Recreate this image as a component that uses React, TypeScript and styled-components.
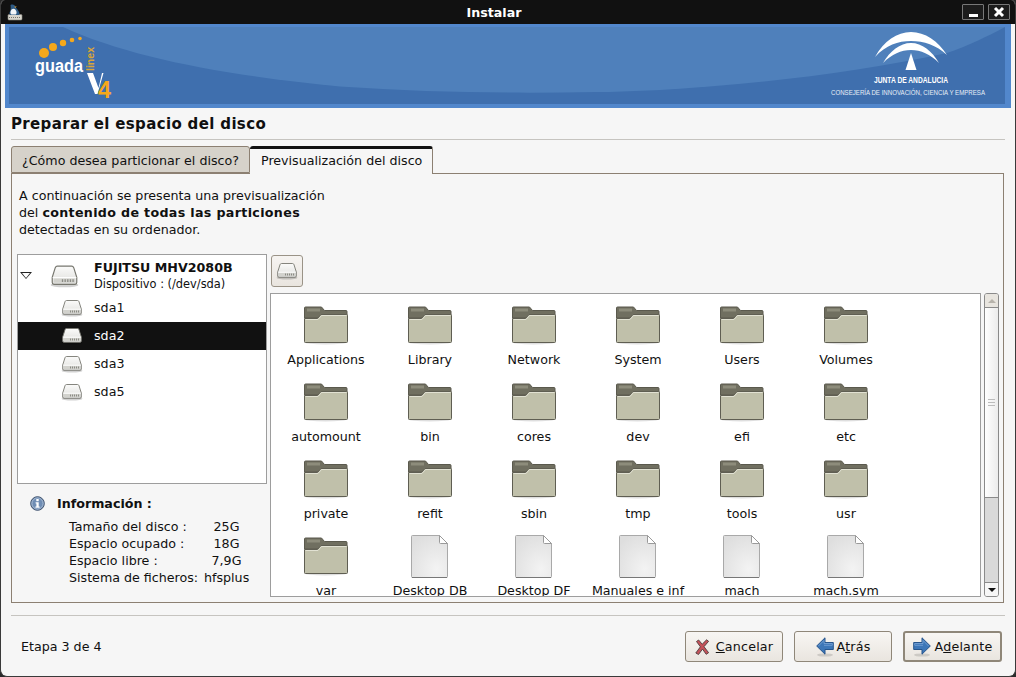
import React from "react";
import styled, { createGlobalStyle } from "styled-components";

const GlobalStyle = createGlobalStyle`
    html, body {
        margin: 0;
        padding: 0;
        background: #2a2a2a;
    }
    * {
        box-sizing: border-box;
    }
`;

const folderRows = [
    ["Applications", "Library", "Network", "System", "Users", "Volumes"],
    ["automount", "bin", "cores", "dev", "efi", "etc"],
    ["private", "refit", "sbin", "tmp", "tools", "usr"],
];

const lastRow = [
    { name: "var", kind: "folder" },
    { name: "Desktop DB", kind: "file" },
    { name: "Desktop DF", kind: "file" },
    { name: "Manuales e inf", kind: "file" },
    { name: "mach", kind: "file" },
    { name: "mach.sym", kind: "file" },
];

const partitions = ["sda1", "sda2", "sda3", "sda5"];

const infoRows = [
    ["Tamaño del disco :", "25G"],
    ["Espacio ocupado :", "18G"],
    ["Espacio libre :", "7,9G"],
    ["Sistema de ficheros:", "hfsplus"],
];

const DiskIcon: React.FC<{ width: number; height: number; id: string }> = ({ width, height, id }) => (
    <svg width={width} height={height} viewBox="0 0 22 18">
        <defs>
            <linearGradient id={id} x1="0" y1="0" x2="0" y2="1">
                <stop offset="0" stopColor="#fbfbfa" />
                <stop offset="1" stopColor="#dededb" />
            </linearGradient>
        </defs>
        <ellipse cx="11" cy="15.8" rx="10.5" ry="1.8" fill="#000" opacity="0.18" />
        <path
            d="M5.5 1.5h11c.8 0 1.2.5 1.5 1.2l2.3 7.3v4c0 .8-.5 1.3-1.3 1.3H3c-.8 0-1.3-.5-1.3-1.3v-4L4 2.7c.3-.7.7-1.2 1.5-1.2z"
            fill={`url(#${id})`}
            stroke="#77776f"
            strokeWidth="0.9"
        />
        <path d="M2 10.2h18" stroke="#fff" strokeWidth="0.8" />
        <rect x="3" y="11" width="16" height="3" fill="#d2d2cd" />
        <path d="M9 12.5h9" stroke="#8b8b85" strokeWidth="2" strokeDasharray="1 1" />
    </svg>
);

const FolderIcon: React.FC = () => (
    <svg width="44" height="39" viewBox="0 0 44 39">
        <ellipse cx="21.5" cy="36" rx="22" ry="2.6" fill="#000" opacity="0.13" />
        <path d="M1.5 1h16l3 3.500h21.500q1 0 1 1V12H.5V2q0-1 1-1z" fill="#706f60" stroke="#5a594d" />
        <path d="M3 4h13" stroke="#8d8c7b" strokeWidth="3" />
        <path
            d="M.5 12.500h13l3.500-4h25.500q1 0 1 1v26q0 1-1 1H1.500q-1 0-1-1z"
            fill="#c0c0aa"
            stroke="#5f5e52"
        />
        <path d="M1.500 13.500h12.500l3.500-4h25" fill="none" stroke="#e1e1d2" />
    </svg>
);

const FileIcon: React.FC = () => (
    <FileArt width="38" height="44" viewBox="0 0 38 44">
        <defs>
            <radialGradient id="sheet" cx="0.7" cy="0.8" r="0.9">
                <stop offset="0" stopColor="#f3f3f3" />
                <stop offset="1" stopColor="#dedede" />
            </radialGradient>
        </defs>
        <path d="M1.500.5h27l8 8v33q0 1-1 1h-34q-1 0-1-1v-40q0-1 1-1z" fill="url(#sheet)" stroke="#a9a9a9" />
        <path d="M1 42.500h35" stroke="#777" />
        <path d="M28.500.5v7q0 1 1 1h7z" fill="#fff" stroke="#9a9a9a" />
    </FileArt>
);

const InfoIcon: React.FC = () => (
    <svg width="15" height="15" viewBox="0 0 15 15">
        <circle cx="7.500" cy="7.500" r="6.800" fill="#6f8db4" stroke="#3c4f6b" />
        <circle cx="7.500" cy="7.500" r="5.600" fill="none" stroke="#a9bcd4" />
        <rect x="6.300" y="3" width="2.400" height="2.200" fill="#fff" />
        <path d="M5.600 6.300h3.100v4.200h1v1.200H5.400v-1.200h1V7.500h-.8z" fill="#fff" />
    </svg>
);

const CancelIcon: React.FC = () => (
    <svg width="15" height="16" viewBox="0 0 15 16">
        <path
            d="M1.500 2.500 3.600 1l3.600 4.200L11.600.8l2 1.500-4.600 5.400 4.600 6-2.400 1.600-3.700-5.200-4 5.400L.8 14l4.600-6.200z"
            fill="#c5525a"
            stroke="#4d3c3c"
            strokeWidth="0.9"
        />
    </svg>
);

const ArrowIcon: React.FC<{ flip?: boolean }> = ({ flip }) => (
    <svg width="18" height="20" viewBox="0 0 18 20" style={flip ? { transform: "scaleX(-1)" } : undefined}>
        <ellipse cx="9" cy="18" rx="8" ry="1.600" fill="#000" opacity="0.13" />
        <path d="M.7 9 9 .8v4.700h8.300v7H9v4.700z" fill="#3d77b8" stroke="#27558c" />
        <path d="M2.400 9 8 3.400v3.100h8.300v1.800H8" fill="none" stroke="#7aa5d6" strokeWidth="0.8" />
    </svg>
);

const AppIcon: React.FC = () => (
    <svg width="16" height="17" viewBox="0 0 16 17">
        <rect x="1" y="10.500" width="14" height="5.500" rx="1" fill="#d8d6ce" stroke="#8b8a82" strokeWidth="0.6" />
        <path d="M2 13.500h12" stroke="#77766f" strokeWidth="1" strokeDasharray="1 1" />
        <path d="M3.500 1C6 0 8 1 8.500 3c1.500 2 3.500 4 4 6.500.2 1-.5 1.500-1.500 1.500H4C2.500 11 2 9.500 2.800 8 4 6 3.800 3 3.500 1z" fill="#2f5c86" />
        <path d="M4.500 5.500c1.500-1 3-.8 4 .3 1.300 1.500 1.500 3.700.3 4.700H4.300c-1.500-1-.8-3.500.2-5z" fill="#f3f6f9" />
        <path d="M7.500 2.500h2.300L8 4z" fill="#e7a83a" />
    </svg>
);

const Banner: React.FC = () => (
    <BannerArt viewBox="5 24 1006 84" width="1006" height="84">
        <rect x="5" y="24" width="1006" height="84" fill="#5287cc" />
        <rect x="9" y="27" width="996" height="77" fill="#3f6fae" />
        <path
            d="M63 27C130 58 230 76 340 86.500 450 94 560 94 660 90 760 84 860 72 947 53 968 46 988 36 1005 27z"
            fill="#4f80bb"
        />
        <circle cx="44" cy="53" r="5" fill="#f5a81c" />
        <circle cx="53" cy="47" r="4" fill="#f5a81c" />
        <circle cx="63" cy="43" r="3.200" fill="#f5a81c" />
        <circle cx="72" cy="40" r="2.300" fill="#f5a81c" />
        <circle cx="80" cy="38.500" r="1.800" fill="#f5a81c" />
        <LogoText x="35" y="72" fontSize="17.500" fontWeight="700" fill="#fff" textLength="48" lengthAdjust="spacingAndGlyphs">
            guada
        </LogoText>
        <LogoText x="0" y="0" fontSize="10" fontWeight="700" fill="#d9a537" transform="translate(94 71) rotate(-90)" textLength="24" lengthAdjust="spacingAndGlyphs">
            linex
        </LogoText>
        <path d="M87 73h6l5.500 15L102 73h1.500L97.500 94h-2.500z" fill="#fff" />
        <LogoText x="98" y="98" fontSize="23" fontWeight="700" fill="#f5a81c" textLength="13" lengthAdjust="spacingAndGlyphs">
            4
        </LogoText>
        <path d="M875 57C884 41 897 32 911 32s27 9 36 23C936 45 924 41 911 41s-25 4-36 16z" fill="#fff" />
        <path d="M883 63C890 51 900 43 911 43s21 8 28 20C930 54 921 50 911 50s-19 4-28 13z" fill="#fff" />
        <path d="M911 53l-5.500 17h11z" fill="#fff" />
        <LogoText x="874" y="83" fontSize="8.500" fontWeight="700" fill="#fff" textLength="74" lengthAdjust="spacingAndGlyphs">
            JUNTA DE ANDALUCIA
        </LogoText>
        <LogoText x="831" y="95" fontSize="7" fill="#e8eef6" textLength="154" lengthAdjust="spacingAndGlyphs">
            CONSEJERÍA DE INNOVACIÓN, CIENCIA Y EMPRESA
        </LogoText>
    </BannerArt>
);

const App: React.FC = () => {
    return (
        <Window>
            <GlobalStyle />
            <TitleBar>
                <AppSlot>
                    <AppIcon />
                </AppSlot>
                <TitleText>Instalar</TitleText>
                <WindowButtons>
                    <WindowButton>
                        <MinimizeMark />
                    </WindowButton>
                    <WindowButton>
                        <svg width="12" height="12" viewBox="0 0 12 12">
                            <path d="M2 2l8 8M10 2l-8 8" stroke="#fff" strokeWidth="3" />
                        </svg>
                    </WindowButton>
                </WindowButtons>
            </TitleBar>
            <Banner />
            <Content>
                <Heading>Preparar el espacio del disco</Heading>
                <TabStrip>
                    <Tab>¿Cómo desea particionar el disco?</Tab>
                    <Tab $active>Previsualización del disco</Tab>
                </TabStrip>
                <Panel>
                    <Intro>
                        A continuación se presenta una previsualización
                        <br />
                        del <Strong>contenido de todas las particiones</Strong>
                        <br />
                        detectadas en su ordenador.
                    </Intro>
                    <Columns>
                        <LeftColumn>
                            <Tree>
                                <DriveRow>
                                    <Expander />
                                    <DriveIconSlot>
                                        <DiskIcon width={29} height={24} id="disk-main" />
                                    </DriveIconSlot>
                                    <div>
                                        <DriveName>FUJITSU MHV2080B</DriveName>
                                        <DrivePath>Dispositivo : (/dev/sda)</DrivePath>
                                    </div>
                                </DriveRow>
                                {partitions.map((p) => (
                                    <PartitionRow key={p} $selected={p === "sda2"}>
                                        <DiskIcon width={22} height={18} id={`disk-${p}`} />
                                        {p}
                                    </PartitionRow>
                                ))}
                            </Tree>
                            <InfoHeader>
                                <InfoIcon />
                                Información :
                            </InfoHeader>
                            <InfoGrid>
                                {infoRows.map(([label, value]) => (
                                    <React.Fragment key={label}>
                                        <span>{label}</span>
                                        <InfoValue>{value}</InfoValue>
                                    </React.Fragment>
                                ))}
                            </InfoGrid>
                        </LeftColumn>
                        <RightColumn>
                            <ToolButton>
                                <DiskIcon width={22} height={18} id="disk-tool" />
                            </ToolButton>
                            <BrowserRow>
                                <IconView>
                                    {folderRows.flat().map((name) => (
                                        <IconCell key={name}>
                                            <IconSlot>
                                                <FolderIcon />
                                            </IconSlot>
                                            <IconLabel>{name}</IconLabel>
                                        </IconCell>
                                    ))}
                                    {lastRow.map((item) => (
                                        <IconCell key={item.name}>
                                            <IconSlot>
                                                {item.kind === "folder" ? <FolderIcon /> : <FileIcon />}
                                            </IconSlot>
                                            <IconLabel>{item.name}</IconLabel>
                                        </IconCell>
                                    ))}
                                </IconView>
                                <ScrollBar>
                                    <ScrollEnd>
                                        <ArrowMark $up />
                                    </ScrollEnd>
                                    <ScrollThumb>
                                        <Grip />
                                    </ScrollThumb>
                                    <ScrollTrough />
                                    <ScrollEnd $bottom>
                                        <ArrowMark />
                                    </ScrollEnd>
                                </ScrollBar>
                            </BrowserRow>
                        </RightColumn>
                    </Columns>
                </Panel>
                <Footer>
                    <StepText>Etapa 3 de 4</StepText>
                    <ButtonRow>
                        <ActionButton $gap={6}>
                            <CancelIcon />
                            <span>
                                <u>C</u>ancelar
                            </span>
                        </ActionButton>
                        <ActionButton $gap={3}>
                            <ArrowIcon />
                            <span>
                                A<u>t</u>rás
                            </span>
                        </ActionButton>
                        <ActionButton $gap={4} $default>
                            <ArrowIcon flip />
                            <span>
                                A<u>d</u>elante
                            </span>
                        </ActionButton>
                    </ButtonRow>
                </Footer>
            </Content>
        </Window>
    );
};

const Window = styled.div`
    width: 1016px;
    height: 677px;
    display: flex;
    flex-direction: column;
    background: #f6f6f6;
    border-radius: 5px 5px 7px 7px;
    border: 1px solid #3a3a3a;
    border-top: none;
    overflow: hidden;
    font-family: "DejaVu Sans", sans-serif;
    font-size: 12.67px;
    color: #101010;
`;

const TitleBar = styled.div`
    height: 24px;
    margin: 0 -1px;
    flex: none;
    display: flex;
    align-items: center;
    padding: 0 6px 0 7px;
    background: #111;
`;

const AppSlot = styled.div`
    width: 16px;
    height: 17px;
    flex: none;
`;

const TitleText = styled.div`
    flex: 1;
    text-align: center;
    color: #fff;
    font-weight: 700;
    font-size: 12.67px;
    padding-left: 3px;
`;

const WindowButtons = styled.div`
    display: flex;
    gap: 4px;
`;

const WindowButton = styled.div`
    width: 22px;
    height: 16px;
    border: 1px solid #777;
    border-radius: 1px;
    display: flex;
    align-items: center;
    justify-content: center;
    background: #1c1c1c;
`;

const MinimizeMark = styled.div`
    width: 9px;
    height: 3px;
    margin-top: 6px;
    background: #fff;
`;

const BannerArt = styled.svg`
    display: block;
    flex: none;
    margin: 0 0 0 4px;
`;

const LogoText = styled.text`
    font-family: "Liberation Sans", sans-serif;
`;

const FileArt = styled.svg`
    margin-top: -2px;
`;

const Content = styled.div`
    flex: 1;
    display: flex;
    flex-direction: column;
    padding: 0 10px;
`;

const Heading = styled.h1`
    height: 32px;
    margin: 0;
    flex: none;
    border-bottom: 1px solid #c6c4c0;
    font-size: 15px;
    line-height: 32px;
    font-weight: 700;
    letter-spacing: 0.35px;
`;

const TabStrip = styled.div`
    display: flex;
    align-items: flex-end;
    height: 33px;
    flex: none;
    position: relative;
    z-index: 1;
`;

const Tab = styled.div<{ $active?: boolean }>`
    height: ${(p) => (p.$active ? "28px" : "27px")};
    padding: ${(p) => (p.$active ? "0 10px 2px 11px" : "1px 10px 0")};
    margin-bottom: ${(p) => (p.$active ? "-1px" : "0")};
    display: flex;
    align-items: center;
    border: 1px solid #8c8072;
    border-radius: 3px 3px 0 0;
    background: ${(p) => (p.$active ? "#f6f6f6" : "#d6d2ca")};
    ${(p) => p.$active && "border-top: 3px solid #111; border-bottom: none; border-left: none;"}
`;

const Panel = styled.div`
    height: 430px;
    flex: none;
    width: 993px;
    border: 1px solid #8c8072;
    padding: 0 4px 5px 5px;
    display: flex;
    flex-direction: column;
`;

const Intro = styled.div`
    height: 80px;
    flex: none;
    padding: 13px 0 0 2px;
    line-height: 17px;
`;

const Strong = styled.strong`
    letter-spacing: 0.33px;
`;

const Columns = styled.div`
    display: flex;
    gap: 3px;
    flex: 1;
`;

const LeftColumn = styled.div`
    width: 250px;
    flex: none;
`;

const Tree = styled.div`
    height: 230px;
    border: 1px solid #9d9d9d;
    background: #fff;
`;

const DriveRow = styled.div`
    height: 39px;
    padding-top: 2px;
    display: flex;
    align-items: center;
`;

const Expander = styled.div`
    width: 0;
    height: 0;
    margin: 0 0 0 2px;
    border-left: 6px solid transparent;
    border-right: 6px solid transparent;
    border-top: 7px solid #222;
    position: relative;

    &::after {
        content: "";
        position: absolute;
        left: -4px;
        top: -6px;
        border-left: 4px solid transparent;
        border-right: 4px solid transparent;
        border-top: 5px solid #fff;
    }
`;

const DriveIconSlot = styled.div`
    width: 62px;
    padding-left: 18px;
    display: flex;
    flex: none;
`;

const DriveName = styled.div`
    font-weight: 700;
    font-size: 12.67px;
    line-height: 16px;
`;

const DrivePath = styled.div`
    font-size: 11.4px;
    line-height: 15px;
    margin-top: 1px;
`;

const PartitionRow = styled.div<{ $selected?: boolean }>`
    height: 28px;
    display: flex;
    align-items: center;
    gap: 11px;
    padding: 0 0 1px 43px;
    background: ${(p) => (p.$selected ? "#111" : "transparent")};
    color: ${(p) => (p.$selected ? "#fff" : "#101010")};
`;

const InfoHeader = styled.div`
    display: flex;
    align-items: center;
    gap: 12px;
    margin: 11px 0 0 13px;
    font-weight: 700;
    height: 16px;
`;

const InfoGrid = styled.div`
    display: grid;
    grid-template-columns: 135px 45px;
    grid-auto-rows: 17px;
    margin: 7px 0 0 52px;
    line-height: 17px;
    white-space: nowrap;
`;

const InfoValue = styled.span`
    text-align: center;
`;

const RightColumn = styled.div`
    flex: 1;
    display: flex;
    flex-direction: column;
    min-width: 0;
`;

const ToolButton = styled.div`
    width: 32px;
    height: 32px;
    margin: 1px 0 6px 1px;
    flex: none;
    display: flex;
    align-items: center;
    justify-content: center;
    border: 1px solid #9a9387;
    border-radius: 3px;
    background: linear-gradient(#f6f4f1, #e9e5df);
`;

const BrowserRow = styled.div`
    height: 304px;
    flex: none;
    display: flex;
    gap: 3px;
`;

const IconView = styled.div`
    width: 711px;
    flex: none;
    display: grid;
    grid-template-columns: repeat(6, 104px);
    grid-auto-rows: 77px;
    padding: 12px 0 0 3px;
    border: 1px solid #9d9d9d;
    background: #fff;
    overflow: hidden;
`;

const IconCell = styled.div`
    display: flex;
    flex-direction: column;
    align-items: center;
`;

const IconSlot = styled.div`
    height: 44px;
    display: flex;
    align-items: flex-start;
    justify-content: center;
`;

const IconLabel = styled.div`
    margin-top: 1px;
    line-height: 17px;
    white-space: nowrap;
`;

const ScrollBar = styled.div`
    width: 15px;
    flex: none;
    display: flex;
    flex-direction: column;
    border: 1px solid #8a8a8a;
    border-radius: 3px;
    overflow: hidden;
`;

const ScrollEnd = styled.div<{ $bottom?: boolean }>`
    height: 14px;
    flex: none;
    display: flex;
    align-items: center;
    justify-content: center;
    background: ${(p) => (p.$bottom ? "#f6f6f6" : "#e8e5df")};
    ${(p) => (p.$bottom ? "border-top: 1px solid #8a8a8a;" : "border-bottom: 1px solid #8a8a8a;")}
`;

const ArrowMark = styled.div<{ $up?: boolean }>`
    width: 0;
    height: 0;
    border-left: 4px solid transparent;
    border-right: 4px solid transparent;
    ${(p) => (p.$up ? "border-bottom: 4px solid #b7b3ab;" : "border-top: 4px solid #111;")}
`;

const ScrollThumb = styled.div`
    height: 190px;
    flex: none;
    display: flex;
    align-items: center;
    justify-content: center;
    background: linear-gradient(90deg, #fff, #ececec);
    border-bottom: 1px solid #8a8a8a;
`;

const Grip = styled.div`
    width: 7px;
    height: 7px;
    background: repeating-linear-gradient(#bcbcbc 0 1px, transparent 1px 3px);
`;

const ScrollTrough = styled.div`
    flex: 1;
    background: #d9d9d9;
`;

const Footer = styled.div`
    flex: 1;
    margin-top: 12px;
    border-top: 1px solid #c6c4c0;
    display: flex;
    align-items: flex-start;
    justify-content: space-between;
    padding: 15px 3px 0 10px;
`;

const StepText = styled.div`
    line-height: 31px;
`;

const ButtonRow = styled.div`
    display: flex;
    gap: 11px;
`;

const ActionButton = styled.div<{ $gap: number; $default?: boolean }>`
    width: ${(p) => (p.$default ? "99px" : "98px")};
    height: 31px;
    display: flex;
    align-items: center;
    justify-content: center;
    gap: ${(p) => p.$gap}px;
    letter-spacing: 0.2px;
    border: ${(p) => (p.$default ? "2px solid #8f8779" : "1px solid #8f8779")};
    border-radius: 3px;
    background: linear-gradient(#f8f6f3, #e9e5df);
`;

export default App;
